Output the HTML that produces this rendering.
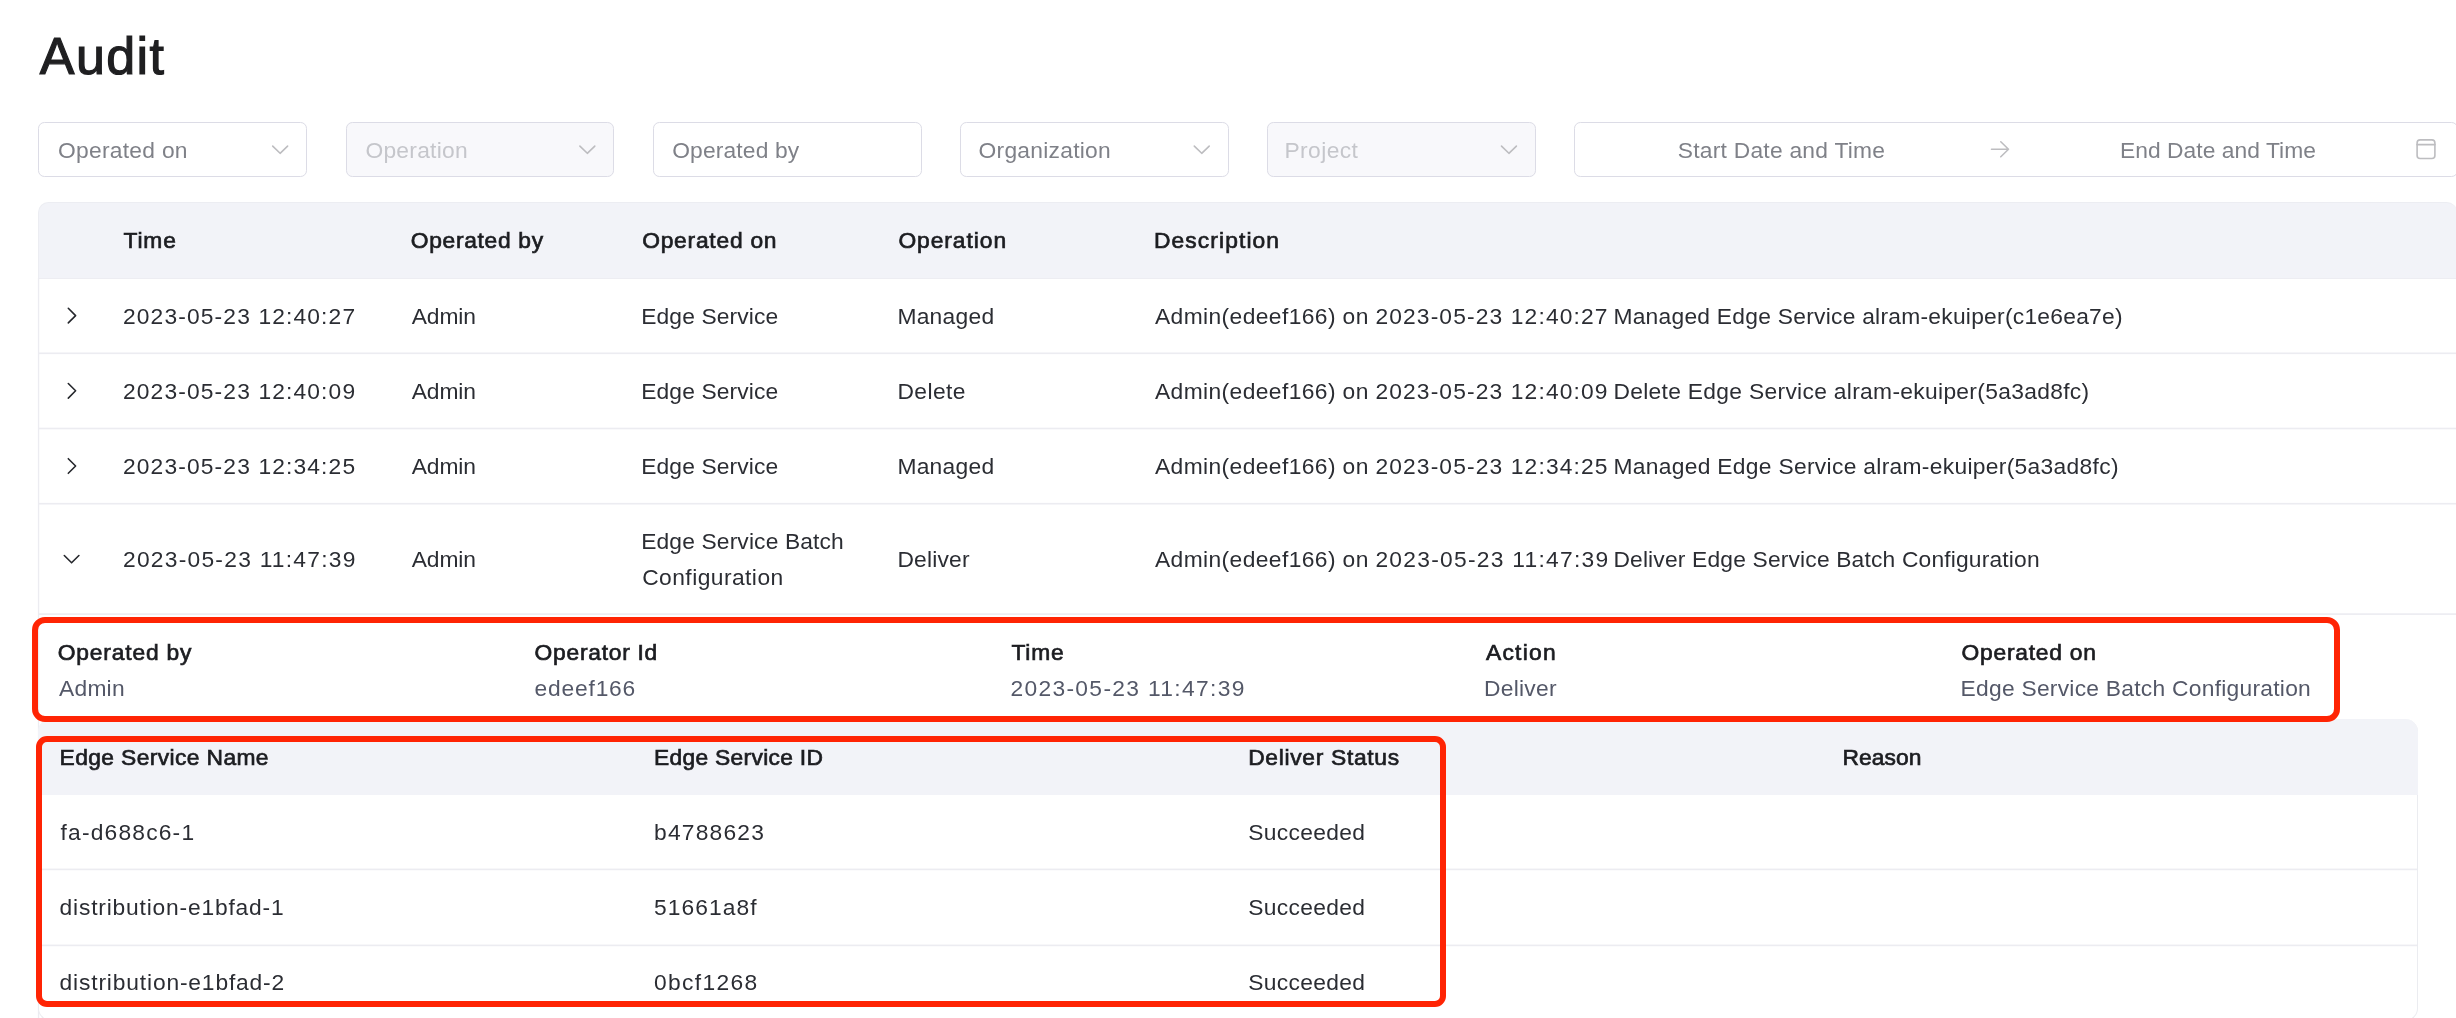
<!DOCTYPE html>
<html><head><meta charset="utf-8">
<style>
html,body{margin:0;padding:0;background:#fff;}
body{width:2456px;height:1018px;overflow:hidden;position:relative;font-family:"Liberation Sans",sans-serif;}
.t{position:absolute;line-height:60px;height:60px;white-space:nowrap;}
.txt{position:absolute;left:0;top:0;width:2456px;height:1018px;will-change:transform;}
.a{position:absolute;box-sizing:border-box;}
.box{position:absolute;box-sizing:border-box;top:122.4px;height:54.4px;width:268.8px;border:1.6px solid #dcdce6;border-radius:6.4px;background:#fff;}
.box.dis{background:#f8f8fb;}
.hl{position:absolute;height:1.6px;background:#ededf2;}
svg{position:absolute;overflow:visible;}
</style></head><body>
<!-- filter boxes -->
<div class="box" style="left:38.4px"></div>
<div class="box dis" style="left:345.6px"></div>
<div class="box" style="left:652.8px"></div>
<div class="box" style="left:960px"></div>
<div class="box dis" style="left:1267.2px"></div>
<div class="box" style="left:1574.4px;width:884px"></div>
<!-- select chevrons -->
<svg style="left:0;top:0" width="2456" height="200">
 <g fill="none" stroke="#bdbdc0" stroke-width="1.6" stroke-linecap="round" stroke-linejoin="round">
  <polyline points="272.7,146.1 280.1,153.3 287.6,146.1"/>
  <polyline points="579.9,146.1 587.3,153.3 594.8,146.1"/>
  <polyline points="1194.3,146.1 1201.7,153.3 1209.2,146.1"/>
  <polyline points="1501.5,146.1 1508.9,153.3 1516.4,146.1"/>
  <path d="M1991.5 149.3 H2008.5 M2000.8 141.8 L2008.5 149.3 L2000.8 156.8"/>
  <rect x="2417.1" y="139.9" width="17.8" height="18.6" rx="3"/>
  <path d="M2417.1 144.6 H2434.9"/>
 </g>
</svg>
<!-- outer table -->
<div class="a" style="left:37.9px;top:202.2px;width:2419px;height:76.4px;background:#f2f3f8;border:1.2px solid #ecedf2;border-bottom:1.6px solid #ededf2;border-right:none;border-radius:10.4px 10.4px 0 0;"></div>
<svg style="left:0;top:0" width="2456" height="1018">
 <g fill="#ececf1">
  <rect x="37.9" y="278" width="1.3" height="740"/>
  <rect x="39" y="352.5" width="2420" height="1.6"/>
  <rect x="39" y="427.7" width="2420" height="1.6"/>
  <rect x="39" y="502.9" width="2420" height="1.6"/>
  <rect x="39" y="613.3" width="2420" height="1.6"/>
 </g>
</svg>
<svg style="left:0;top:0" width="200" height="600">
 <g fill="none" stroke="#25272c" stroke-width="1.6" stroke-linecap="round" stroke-linejoin="round">
  <polyline points="68.3,308.3 75.6,315.6 68.3,322.9"/>
  <polyline points="68.3,383.5 75.6,390.8 68.3,398.1"/>
  <polyline points="68.3,458.7 75.6,466 68.3,473.3"/>
  <polyline points="64.3,555.5 71.6,562.8 78.9,555.5"/>
 </g>
</svg>
<!-- inner table -->
<div class="a" style="left:38.4px;top:719.4px;width:2379.6px;height:302px;border:1.6px solid #ebecf0;border-top:none;border-radius:12.8px;background:#fff;"></div>
<div class="a" style="left:38.4px;top:719.4px;width:2379.6px;height:75.6px;background:#f2f3f8;border-radius:12.8px 12.8px 0 0;"></div>
<svg style="left:0;top:0" width="2456" height="1018">
 <g fill="#ececf1">
  <rect x="40" y="868.6" width="2377" height="1.6"/>
  <rect x="40" y="944.6" width="2377" height="1.6"/>
 </g>
</svg>
<div class="txt">
<span class="t" style="left:39.80px;top:25.60px;font-size:52px;color:#1f1f21;letter-spacing:1.400px;-webkit-text-stroke:1.2px #1f1f21">Audit</span>
<span class="t" style="left:58.00px;top:120.46px;font-size:22.8px;color:#7f8188;letter-spacing:0.280px">Operated on</span>
<span class="t" style="left:365.40px;top:120.46px;font-size:22.8px;color:#c5c6cb;letter-spacing:0.275px">Operation</span>
<span class="t" style="left:672.20px;top:120.46px;font-size:22.8px;color:#7f8188;letter-spacing:0.160px">Operated by</span>
<span class="t" style="left:978.60px;top:120.46px;font-size:22.8px;color:#7f8188;letter-spacing:0.255px">Organization</span>
<span class="t" style="left:1284.40px;top:120.46px;font-size:22.8px;color:#c5c6cb;letter-spacing:0.433px">Project</span>
<span class="t" style="left:1677.80px;top:120.46px;font-size:22.8px;color:#7f8188;letter-spacing:0.244px">Start Date and Time</span>
<span class="t" style="left:2120.00px;top:120.46px;font-size:22.8px;color:#7f8188;letter-spacing:0.050px">End Date and Time</span>
<span class="t" style="left:123.60px;top:210.46px;font-size:22.8px;color:#1c1d21;letter-spacing:0.800px;-webkit-text-stroke:0.7px #1c1d21">Time</span>
<span class="t" style="left:410.80px;top:210.46px;font-size:22.8px;color:#1c1d21;letter-spacing:0.680px;-webkit-text-stroke:0.7px #1c1d21">Operated by</span>
<span class="t" style="left:642.20px;top:210.46px;font-size:22.8px;color:#1c1d21;letter-spacing:0.760px;-webkit-text-stroke:0.7px #1c1d21">Operated on</span>
<span class="t" style="left:898.40px;top:210.46px;font-size:22.8px;color:#1c1d21;letter-spacing:0.950px;-webkit-text-stroke:0.7px #1c1d21">Operation</span>
<span class="t" style="left:1154.00px;top:210.46px;font-size:22.8px;color:#1c1d21;letter-spacing:1.100px;-webkit-text-stroke:0.7px #1c1d21">Description</span>
<span class="t" style="left:123.00px;top:286.26px;font-size:22.8px;color:#2b2d33;letter-spacing:1.133px">2023-05-23 12:40:27</span>
<span class="t" style="left:411.80px;top:286.26px;font-size:22.8px;color:#2b2d33;letter-spacing:-0.150px">Admin</span>
<span class="t" style="left:641.20px;top:286.26px;font-size:22.8px;color:#2b2d33;letter-spacing:0.127px">Edge Service</span>
<span class="t" style="left:897.40px;top:286.26px;font-size:22.8px;color:#2b2d33;letter-spacing:0.267px">Managed</span>
<span class="t" style="left:1155.00px;top:286.26px;font-size:22.8px;color:#2b2d33;letter-spacing:0.400px">Admin(edeef166) on</span>
<span class="t" style="left:1375.40px;top:286.26px;font-size:22.8px;color:#2b2d33;letter-spacing:1.133px">2023-05-23 12:40:27</span>
<span class="t" style="left:1613.40px;top:286.26px;font-size:22.8px;color:#2b2d33;letter-spacing:0.260px">Managed Edge Service alram-ekuiper(c1e6ea7e)</span>
<span class="t" style="left:123.00px;top:361.26px;font-size:22.8px;color:#2b2d33;letter-spacing:1.133px">2023-05-23 12:40:09</span>
<span class="t" style="left:411.80px;top:361.26px;font-size:22.8px;color:#2b2d33;letter-spacing:-0.150px">Admin</span>
<span class="t" style="left:641.20px;top:361.26px;font-size:22.8px;color:#2b2d33;letter-spacing:0.127px">Edge Service</span>
<span class="t" style="left:897.40px;top:361.26px;font-size:22.8px;color:#2b2d33;letter-spacing:0.440px">Delete</span>
<span class="t" style="left:1155.00px;top:361.26px;font-size:22.8px;color:#2b2d33;letter-spacing:0.400px">Admin(edeef166) on</span>
<span class="t" style="left:1375.40px;top:361.26px;font-size:22.8px;color:#2b2d33;letter-spacing:1.133px">2023-05-23 12:40:09</span>
<span class="t" style="left:1613.40px;top:361.26px;font-size:22.8px;color:#2b2d33;letter-spacing:0.314px">Delete Edge Service alram-ekuiper(5a3ad8fc)</span>
<span class="t" style="left:123.00px;top:436.26px;font-size:22.8px;color:#2b2d33;letter-spacing:1.133px">2023-05-23 12:34:25</span>
<span class="t" style="left:411.80px;top:436.26px;font-size:22.8px;color:#2b2d33;letter-spacing:-0.150px">Admin</span>
<span class="t" style="left:641.20px;top:436.26px;font-size:22.8px;color:#2b2d33;letter-spacing:0.127px">Edge Service</span>
<span class="t" style="left:897.40px;top:436.26px;font-size:22.8px;color:#2b2d33;letter-spacing:0.267px">Managed</span>
<span class="t" style="left:1155.00px;top:436.26px;font-size:22.8px;color:#2b2d33;letter-spacing:0.400px">Admin(edeef166) on</span>
<span class="t" style="left:1375.40px;top:436.26px;font-size:22.8px;color:#2b2d33;letter-spacing:1.133px">2023-05-23 12:34:25</span>
<span class="t" style="left:1613.40px;top:436.26px;font-size:22.8px;color:#2b2d33;letter-spacing:0.312px">Managed Edge Service alram-ekuiper(5a3ad8fc)</span>
<span class="t" style="left:123.00px;top:529.26px;font-size:22.8px;color:#2b2d33;letter-spacing:1.244px">2023-05-23 11:47:39</span>
<span class="t" style="left:411.80px;top:529.26px;font-size:22.8px;color:#2b2d33;letter-spacing:-0.150px">Admin</span>
<span class="t" style="left:641.20px;top:511.26px;font-size:22.8px;color:#2b2d33;letter-spacing:0.141px">Edge Service Batch</span>
<span class="t" style="left:642.20px;top:547.26px;font-size:22.8px;color:#2b2d33;letter-spacing:0.450px">Configuration</span>
<span class="t" style="left:897.40px;top:529.26px;font-size:22.8px;color:#2b2d33;letter-spacing:0.200px">Deliver</span>
<span class="t" style="left:1155.00px;top:529.26px;font-size:22.8px;color:#2b2d33;letter-spacing:0.400px">Admin(edeef166) on</span>
<span class="t" style="left:1375.40px;top:529.26px;font-size:22.8px;color:#2b2d33;letter-spacing:1.267px">2023-05-23 11:47:39</span>
<span class="t" style="left:1613.40px;top:529.26px;font-size:22.8px;color:#2b2d33;letter-spacing:0.174px">Deliver Edge Service Batch Configuration</span>
<span class="t" style="left:57.80px;top:621.96px;font-size:22.8px;color:#1c1d21;letter-spacing:0.820px;-webkit-text-stroke:0.7px #1c1d21">Operated by</span>
<span class="t" style="left:534.60px;top:621.96px;font-size:22.8px;color:#1c1d21;letter-spacing:0.740px;-webkit-text-stroke:0.7px #1c1d21">Operator Id</span>
<span class="t" style="left:1011.40px;top:621.96px;font-size:22.8px;color:#1c1d21;letter-spacing:0.800px;-webkit-text-stroke:0.7px #1c1d21">Time</span>
<span class="t" style="left:1486.00px;top:621.96px;font-size:22.8px;color:#1c1d21;letter-spacing:1.240px;-webkit-text-stroke:0.7px #1c1d21">Action</span>
<span class="t" style="left:1961.60px;top:621.96px;font-size:22.8px;color:#1c1d21;letter-spacing:0.760px;-webkit-text-stroke:0.7px #1c1d21">Operated on</span>
<span class="t" style="left:59.00px;top:657.76px;font-size:22.8px;color:#545868;letter-spacing:0.250px">Admin</span>
<span class="t" style="left:534.60px;top:657.76px;font-size:22.8px;color:#545868;letter-spacing:0.800px">edeef166</span>
<span class="t" style="left:1010.40px;top:657.76px;font-size:22.8px;color:#545868;letter-spacing:1.333px">2023-05-23 11:47:39</span>
<span class="t" style="left:1484.00px;top:657.76px;font-size:22.8px;color:#545868;letter-spacing:0.267px">Deliver</span>
<span class="t" style="left:1960.60px;top:657.76px;font-size:22.8px;color:#545868;letter-spacing:0.258px">Edge Service Batch Configuration</span>
<span class="t" style="left:59.60px;top:726.76px;font-size:22.8px;color:#1c1d21;letter-spacing:0.387px;-webkit-text-stroke:0.7px #1c1d21">Edge Service Name</span>
<span class="t" style="left:654.00px;top:726.76px;font-size:22.8px;color:#1c1d21;letter-spacing:0.300px;-webkit-text-stroke:0.7px #1c1d21">Edge Service ID</span>
<span class="t" style="left:1248.20px;top:726.76px;font-size:22.8px;color:#1c1d21;letter-spacing:0.692px;-webkit-text-stroke:0.7px #1c1d21">Deliver Status</span>
<span class="t" style="left:1842.60px;top:726.76px;font-size:22.8px;color:#1c1d21;letter-spacing:0.040px;-webkit-text-stroke:0.7px #1c1d21">Reason</span>
<span class="t" style="left:60.60px;top:801.86px;font-size:22.8px;color:#2b2d33;letter-spacing:1.180px">fa-d688c6-1</span>
<span class="t" style="left:654.00px;top:801.86px;font-size:22.8px;color:#2b2d33;letter-spacing:1.200px">b4788623</span>
<span class="t" style="left:1248.20px;top:801.86px;font-size:22.8px;color:#2b2d33;letter-spacing:0.325px">Succeeded</span>
<span class="t" style="left:59.60px;top:877.36px;font-size:22.8px;color:#2b2d33;letter-spacing:0.810px">distribution-e1bfad-1</span>
<span class="t" style="left:654.00px;top:877.36px;font-size:22.8px;color:#2b2d33;letter-spacing:1.057px">51661a8f</span>
<span class="t" style="left:1248.20px;top:877.36px;font-size:22.8px;color:#2b2d33;letter-spacing:0.325px">Succeeded</span>
<span class="t" style="left:59.60px;top:952.46px;font-size:22.8px;color:#2b2d33;letter-spacing:0.840px">distribution-e1bfad-2</span>
<span class="t" style="left:654.00px;top:952.46px;font-size:22.8px;color:#2b2d33;letter-spacing:1.343px">0bcf1268</span>
<span class="t" style="left:1248.20px;top:952.46px;font-size:22.8px;color:#2b2d33;letter-spacing:0.325px">Succeeded</span>
</div>
<!-- red annotation boxes -->
<div class="a" style="left:32.4px;top:617.4px;width:2307.6px;height:104.4px;border:6.3px solid #ff2404;border-radius:13px;"></div>
<div class="a" style="left:35.5px;top:735.7px;width:1410.5px;height:271px;border:6.3px solid #ff2404;border-radius:11px;"></div>
</body></html>
